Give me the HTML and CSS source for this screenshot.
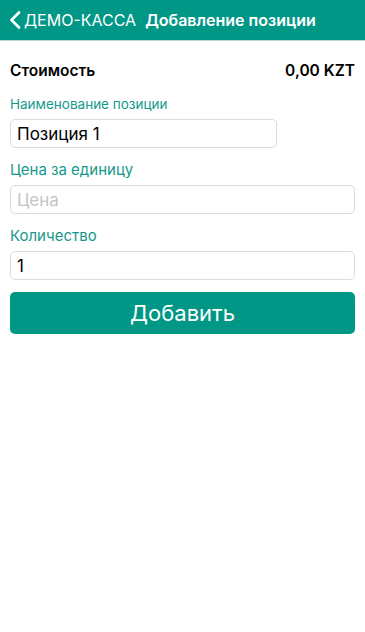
FILE: index.html
```html
<!DOCTYPE html>
<html lang="ru">
<head>
    <meta charset="UTF-8">
    <meta name="viewport" content="width=device-width, initial-scale=1.0">
    <title>Добавление позиции</title>
    <link rel="stylesheet" href="styles.css">
</head>
<body>
    <header class="navbar">
        <a class="back" href="#">
            <svg class="chevron" width="12" height="18" viewBox="0 0 12 18">
                <path d="M10 1.5 L2.5 9 L10 16.5" fill="none" stroke="#fff" stroke-width="2.6" stroke-linecap="round" stroke-linejoin="round"/>
            </svg>
            <span>ДЕМО-КАССА</span>
        </a>
        <h1 class="title">Добавление позиции</h1>
    </header>

    <main class="content">
        <div class="total">
            <span>Стоимость</span>
            <span>0,00 KZT</span>
        </div>

        <label class="field-label small" for="name">Наименование позиции</label>
        <input class="field short" type="text" id="name" value="Позиция 1">

        <label class="field-label" for="price">Цена за единицу</label>
        <input class="field" type="text" id="price" placeholder="Цена">

        <label class="field-label" for="qty">Количество</label>
        <input class="field" type="text" id="qty" value="1">

        <button type="button" class="add-btn">Добавить</button>
    </main>
</body>
</html>
```

FILE: styles.css
```css
/* Общие стили */
body {
    margin: 0;
    padding: 0;
    font-family: 'Inter', 'Noto Sans', sans-serif;
    background-color: #ffffff;
    color: #000;
}

.navbar {
    display: flex;
    align-items: center;
    height: 40px;
    padding-left: 9px;
    background-color: #009786;
    border-bottom: 1px solid #b8dcd6;
    color: #fff;
}

.back {
    display: flex;
    align-items: center;
    gap: 3px;
    color: #fff;
    text-decoration: none;
    font-size: 16px;
}

.chevron {
    display: block;
}

.title {
    margin: 0 0 0 9px;
    font-size: 16px;
    font-weight: 600;
}

.content {
    display: flex;
    flex-direction: column;
    padding: 20px 10px 0;
}

.total {
    display: flex;
    justify-content: space-between;
    line-height: 20px;
    font-size: 15.5px;
    font-weight: 600;
    margin-bottom: 15px;
}

.field-label {
    color: #14998a;
    font-size: 15px;
    line-height: 18px;
    margin: 13px 0 6px;
}

.field-label.small {
    font-size: 13.5px;
    line-height: 16px;
    margin: 0 0 7px;
}

.field {
    box-sizing: border-box;
    height: 29px;
    width: 100%;
    padding: 0 6px;
    border: 1px solid #dcdcdc;
    border-radius: 5px;
    font-family: inherit;
    font-size: 17px;
    color: #000;
    outline: none;
}

.field.short {
    width: 267px;
}

.field::placeholder {
    color: #c4c4c6;
}

.add-btn {
    margin-top: 12px;
    height: 42px;
    width: 100%;
    border: none;
    border-radius: 5px;
    background-color: #009786;
    color: #fff;
    font-family: inherit;
    font-size: 22px;
    cursor: pointer;
}
```
